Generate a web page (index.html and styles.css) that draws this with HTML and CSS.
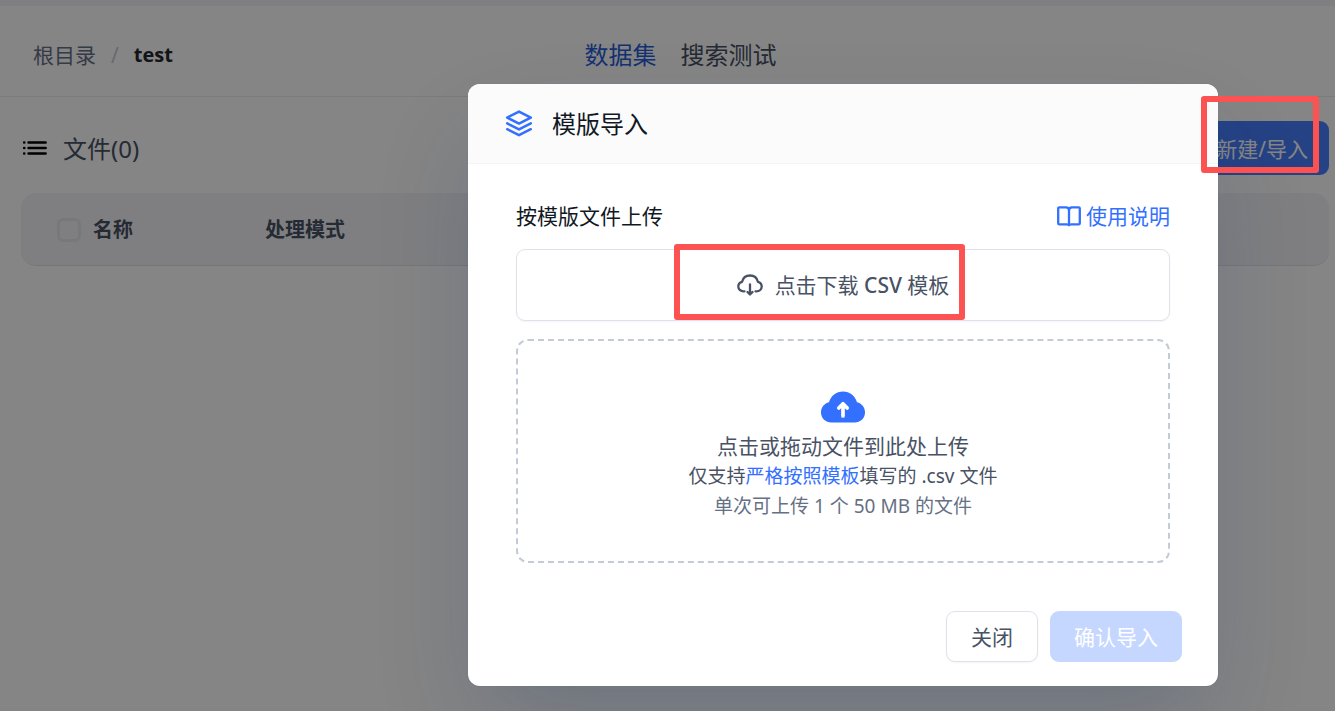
FILE: index.html
```html
<!DOCTYPE html>
<html lang="zh-CN">
<head>
<meta charset="utf-8" />
<title>test - 数据集</title>
<meta name="viewport" content="width=device-width, initial-scale=1.0"/>
<link rel="stylesheet" href="styles.css">
</head>
<body>

<div class="page">
	<header class="top">
		<nav class="path">
			<a href="#">根目录</a><span class="slash">/</span><b>test</b>
		</nav>
		<nav class="tabs">
			<a href="#" class="active">数据集</a>
			<a href="#">搜索测试</a>
		</nav>
	</header>

	<main class="files">
		<div class="toolbar">
			<svg class="list-icon" viewBox="0 0 26 16" width="26" height="16">
				<path d="M7.500 2.500H24.700M7.500 8H24.700M7.500 13.500H24.700" stroke="#000" stroke-width="2.400" stroke-linecap="round"/>
				<path d="M3.200 2.500h.1M3.200 8h.1M3.200 13.500h.1" stroke="#000" stroke-width="2.600" stroke-linecap="round"/>
			</svg>
			<h1>文件(0)</h1>
			<button type="button" class="create">新建/导入</button>
		</div>
		<table>
			<thead>
				<tr>
					<th class="name"><label><input type="checkbox"/>名称</label></th>
					<th>处理模式</th>
				</tr>
			</thead>
		</table>
	</main>
</div>

<div class="overlay">
	<section class="modal" role="dialog" aria-labelledby="modal-title">
		<header class="modal-head">
			<svg viewBox="0 0 28 28" width="28" height="28" fill="none" stroke="#3370ff" stroke-width="2.500" stroke-linejoin="round" stroke-linecap="round">
				<path d="M14 1.600L25.800 7.600L14 13.600L2.200 7.600Z"/>
				<path d="M2.200 13.400L14 19.400L25.800 13.400"/>
				<path d="M2.200 19.200L14 25.200L25.800 19.200"/>
			</svg>
			<h2 id="modal-title">模版导入</h2>
		</header>

		<div class="modal-body">
			<div class="row">
				<span>按模版文件上传</span>
				<a href="#" class="help">
					<svg viewBox="0 0 24 21" width="24" height="21" fill="none" stroke="#3370ff" stroke-width="2.300" stroke-linejoin="round">
						<path d="M12 4.500C12 2.600 10.800 1.300 9 1.300H2.300C1.600 1.300 1.200 1.700 1.200 2.400V17.200C1.200 17.900 1.600 18.300 2.300 18.300H9.500C11 18.300 12 18.800 12 19.300C12 18.800 13 18.300 14.500 18.300H21.700C22.400 18.300 22.800 17.900 22.800 17.200V2.400C22.800 1.700 22.400 1.300 21.700 1.300H15C13.200 1.300 12 2.600 12 4.500ZM12 4V19"/>
					</svg>
					使用说明
				</a>
			</div>

			<div class="download-wrap">
				<button type="button" class="download">
					<svg viewBox="0 0 26 22" width="26" height="22" fill="none" stroke="#485264" stroke-width="2.300" stroke-linecap="round" stroke-linejoin="round">
						<path d="M7.500 17.300H6.500C3.500 17.300 1.300 15.200 1.300 12.500C1.300 10.200 2.800 8.300 5.100 7.800C6 4 9 1.500 13 1.500S20 4 20.900 7.800C23.200 8.300 24.700 10.200 24.700 12.500C24.700 15.200 22.500 17.300 19.500 17.300H18.500"/>
						<path d="M13 10.500V20M10.500 18L13 20.500L15.500 18"/>
					</svg>
					<span>点击下载 <b>CSV</b> 模板</span>
				</button>
				<div class="mark mark-download"></div>
			</div>

			<div class="drop">
				<svg viewBox="0 0 44 32" width="44" height="32">
					<path d="M10.500 31.500C4.600 31.500 0 27.200 0 21.500C0 16.300 3.300 12.500 8 11.300C9.800 4.700 15.200 .4 22 .4S34.200 4.700 36 11.300C40.700 12.500 44 16.300 44 21.500C44 27.200 39.400 31.500 33.500 31.500Z" fill="#3370ff"/>
					<path d="M22 25V13.500M17.800 17L22 12.800L26.200 17" fill="none" stroke="#fff" stroke-width="3.700" stroke-linecap="round" stroke-linejoin="round"/>
				</svg>
				<p class="main-tip">点击或拖动文件到此处上传</p>
				<p>仅支持<a href="#">严格按照模板</a>填写的 .csv 文件</p>
				<p class="limit">单次可上传 1 个 50 MB 的文件</p>
			</div>
		</div>

		<footer class="modal-foot">
			<button type="button" class="close">关闭</button>
			<button type="button" class="confirm" disabled>确认导入</button>
		</footer>
	</section>
</div>

<div class="mark mark-create"></div>

</body>
</html>
```
FILE: styles.css
```css
* { box-sizing: border-box; }
body {
	margin: 0;
	min-height: 100vh;
	position: relative;
	overflow: hidden;
	background: #f4f4f7;
	color: #485264;
	font-family: "Noto Sans", "Noto Sans CJK SC", sans-serif;
	font-size: 21px;
	line-height: 30px;
}
h1, h2, p { margin: 0; font-weight: 400; }
h1, h2 { font-size: 24px; line-height: 36px; }
a { color: inherit; text-decoration: none; }
button { font: inherit; border-radius: 9px; }
svg { flex: none; }

/* page behind the dialog */
.page {
	margin-top: 6px;
	min-height: calc(100vh - 6px);
	background: #fff;
}
.top {
	display: grid;
	grid-template-columns: 1fr auto 1fr;
	align-items: center;
	height: 91px;
	padding: 8px 7px 0 33px;
	border-bottom: 1px solid #e8ebf0;
}
.path { display: flex; color: #667085; }
.path b {
	color: #24282c;
	font-family: "Open Sans", sans-serif;
	font-weight: 700;
	font-size: 20px;
}
.slash { color: #c4cbd7; padding: 0 15px; }
.tabs { display: flex; gap: 24px; font-size: 24px; }
.tabs .active { color: #2b5fd9; }

.files { padding: 24px 6px 0 21px; }
.toolbar { display: flex; align-items: center; }
.toolbar h1 { margin-left: 16px; padding-top: 2px; }
.create {
	margin-left: auto;
	height: 54px;
	padding: 2px 21px 0 57px;
	border: 0;
	background: #487fff;
	color: #fff;
}
table {
	width: 100%;
	margin-top: 18px;
	border-spacing: 0;
	table-layout: fixed;
	font-size: 20px;
}
th {
	height: 73px;
	padding: 2px 0 0;
	text-align: left;
	font-weight: 700;
	background: #f4f4f7;
	border-bottom: 1px solid #dfe2ea;
}
th:first-child { border-radius: 15px 0 0 15px; }
th:last-child { border-radius: 0 15px 15px 0; }
.name { width: 244px; padding-left: 36px; }
.name label { display: flex; align-items: center; gap: 12px; }
input[type=checkbox] {
	appearance: none;
	width: 24px;
	height: 24px;
	margin: 0;
	border: 3px solid #e4e7ee;
	border-radius: 6px;
}

/* dialog */
.overlay {
	position: absolute;
	inset: 0;
	display: flex;
	justify-content: flex-end;
	align-items: flex-start;
	padding: 84px 117px 0 20px;
	background: rgba(0,0,0,.48);
}
.modal {
	width: 100%;
	max-width: 750px;
	border-radius: 12px;
	background: #fff;
	overflow: hidden;
	box-shadow: 0 48px 96px -12px rgba(19,51,107,.2), 0 0 1px rgba(19,51,107,.2);
}
.modal-head {
	display: flex;
	align-items: center;
	gap: 19px;
	height: 80px;
	padding: 0 37px;
	background: #fbfbfc;
	border-bottom: 1px solid #f4f4f7;
	color: #111824;
}
.modal-body { padding: 36px 48px; }
.row {
	display: flex;
	justify-content: space-between;
	align-items: center;
	padding-top: 1px;
	color: #111824;
}
.help { display: flex; align-items: center; gap: 5px; color: #3370ff; }
.download-wrap { position: relative; margin: 18px 0; }
.download {
	display: flex;
	align-items: center;
	justify-content: center;
	gap: 12px;
	width: 100%;
	height: 72px;
	border: 1px solid #dfe2ea;
	background: #fff;
	color: #485264;
	box-shadow: 0 1px 2px rgba(19,51,107,.05);
}
.download b { font-weight: 500; }
.drop {
	display: flex;
	flex-direction: column;
	align-items: center;
	padding: 50px 20px 40px;
	border: 2px dashed #c4cbd7;
	border-radius: 12px;
	font-size: 19px;
}
.drop a { color: #3370ff; }
.drop .main-tip { margin-top: 8px; font-size: 21px; }
.limit { color: #667085; }
.modal-foot {
	display: flex;
	justify-content: flex-end;
	gap: 12px;
	padding: 12px 36px 24px;
}
.modal-foot button { height: 51px; padding: 0 24px; }
.close {
	border: 1px solid #dfe2ea;
	background: #fff;
	color: #485264;
	box-shadow: 0 1px 2px rgba(19,51,107,.05);
}
.confirm { border: 0; background: #c5d7ff; color: #fff; }

/* red frames that point at the steps */
.mark {
	position: absolute;
	border: 6px solid #fc5352;
	border-radius: 3px;
	pointer-events: none;
}
.mark-create { top: 96px; right: 16px; width: 118px; height: 77px; }
.mark-download { top: -5px; bottom: 1px; left: 158px; right: 205px; }
```
